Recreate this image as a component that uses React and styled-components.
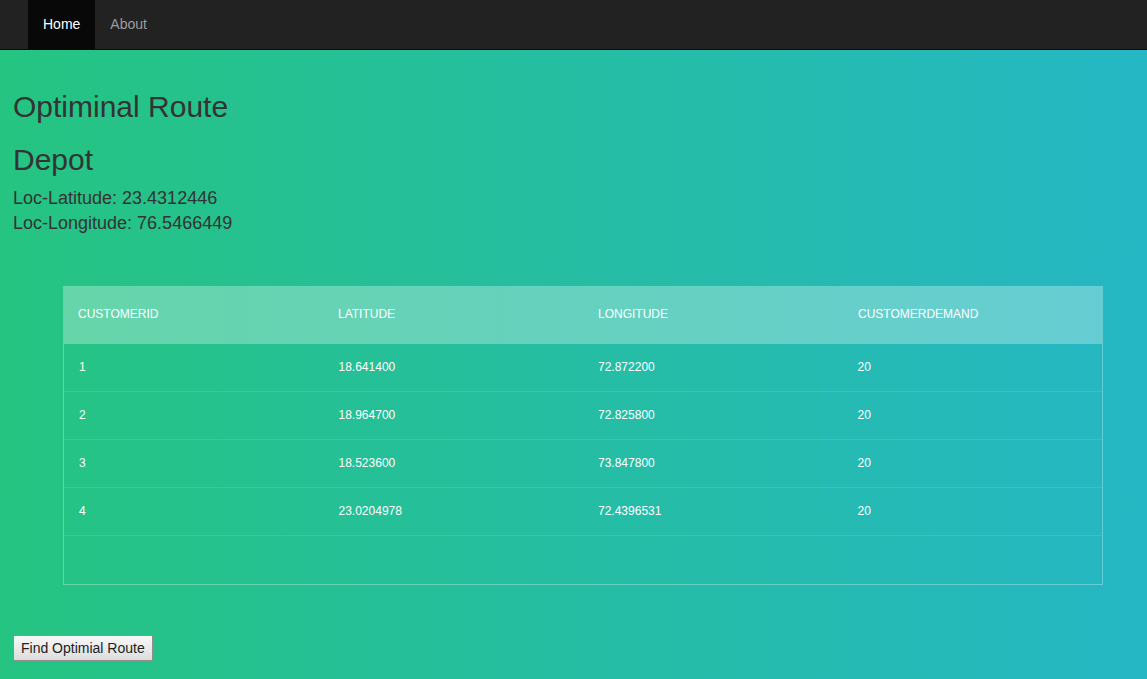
import React from 'react'
import styled, { createGlobalStyle } from 'styled-components'

const GlobalStyle = createGlobalStyle`
        html, body {
                margin: 0;
                padding: 0;
        }
        body {
                min-height: 679px;
                background: linear-gradient(to right, #25c481, #25b7c4);
                font-family: "Liberation Sans", Arial, sans-serif;
                font-size: 14px;
                line-height: 1.42857;
                color: #333;
        }
`

const NavBar = styled.nav`
        height: 49px;
        background-color: #222;
        border-bottom: 1px solid #080808;
        display: flex;
        padding-left: 28px;
`

const NavLink = styled.a`
        display: block;
        padding: 15px;
        line-height: 19px;
        font-size: 14px;
        text-decoration: none;
        color: ${props => (props.active ? '#fff' : '#9d9d9d')};
        background-color: ${props => (props.active ? '#080808' : 'transparent')};
`

const Main = styled.main`
        padding: 20px 13px 0 13px;
`

const Title = styled.h2`
        font-size: 30px;
        font-weight: 500;
        line-height: 1.1;
        margin: 20px 0 10px 0;
        color: #333;
`

const Info = styled.div`
        font-size: 18px;
        line-height: 25px;
        color: #333;
`

const TableSection = styled.section`
        width: 1040px;
        margin: 50px 0 0 50px;
`

const TableHeader = styled.div`
        background-color: rgba(255, 255, 255, 0.3);
`

const TableContent = styled.div`
        height: 240px;
        overflow-x: auto;
        border: 1px solid rgba(255, 255, 255, 0.3);
`

const Table = styled.table`
        width: 100%;
        table-layout: fixed;
        border-collapse: collapse;
        border-spacing: 0;
`

const Th = styled.th`
        padding: 20px 15px;
        text-align: left;
        font-weight: 500;
        font-size: 12px;
        line-height: 17px;
        color: #fff;
        text-transform: uppercase;
`

const Td = styled.td`
        padding: 15px;
        text-align: left;
        vertical-align: middle;
        font-size: 12px;
        line-height: 17px;
        color: #fff;
        border-bottom: 1px solid rgba(255, 255, 255, 0.1);
`

const Footer = styled.div`
        padding: 50px 0 18px 0;
`

const Button = styled.button`
        font-family: "Liberation Sans", Arial, sans-serif;
        font-size: 14px;
        line-height: 20px;
        padding: 2px 7px;
        color: #222;
        background: linear-gradient(#f8f8f8, #dddddd);
        border: 1px solid #8f8f8f;
        border-radius: 1px;
`

const customers = [
    { id: 1, lat: '18.641400', lng: '72.872200', demand: 20 },
    { id: 2, lat: '18.964700', lng: '72.825800', demand: 20 },
    { id: 3, lat: '18.523600', lng: '73.847800', demand: 20 },
    { id: 4, lat: '23.0204978', lng: '72.4396531', demand: 20 },
]

const App = () => {
    return (
        <div>
            <GlobalStyle />
            <NavBar>
                <NavLink href="#" active>Home</NavLink>
                <NavLink href="#">About</NavLink>
            </NavBar>
            <Main>
                <Title>Optiminal Route</Title>
                <Title>Depot</Title>
                <Info>
                    Loc-Latitude: 23.4312446<br />
                    Loc-Longitude: 76.5466449
                </Info>
                <TableSection>
                    <TableHeader>
                        <Table>
                            <thead>
                                <tr>
                                    <Th>CustomerId</Th>
                                    <Th>Latitude</Th>
                                    <Th>Longitude</Th>
                                    <Th>CustomerDemand</Th>
                                </tr>
                            </thead>
                        </Table>
                    </TableHeader>
                    <TableContent>
                        <Table>
                            <tbody>
                                {customers.map(c => (
                                    <tr key={c.id}>
                                        <Td>{c.id}</Td>
                                        <Td>{c.lat}</Td>
                                        <Td>{c.lng}</Td>
                                        <Td>{c.demand}</Td>
                                    </tr>
                                ))}
                            </tbody>
                        </Table>
                    </TableContent>
                </TableSection>
                <Footer>
                    <Button>Find Optimial Route</Button>
                </Footer>
            </Main>
        </div>
    )
}

export default App
